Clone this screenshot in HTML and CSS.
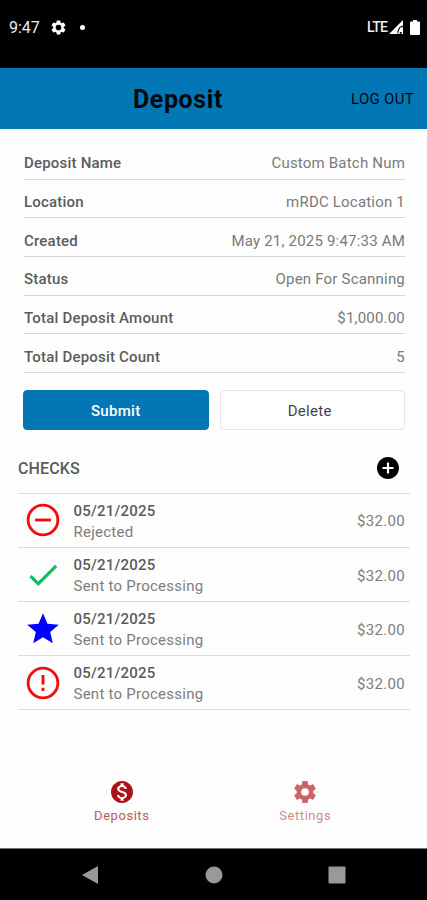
FILE: index.html
```html
<!DOCTYPE html>
<html lang="en">
<head>
  <meta charset="UTF-8" />
  <meta name="viewport" content="width=device-width, initial-scale=1.0"/>
  <title>Deposit</title>
  <link rel="stylesheet" href="styles.css">
</head>
<body>
  <div class="status-bar">
    <span class="clock">9:47</span>
    <svg class="status-gear" viewBox="0 0 24 24"><path d="M19.43 12.98c.04-.32.07-.64.07-.98s-.03-.66-.07-.98l2.11-1.65c.19-.15.24-.42.12-.64l-2-3.46c-.12-.22-.39-.3-.61-.22l-2.49 1c-.52-.4-1.08-.73-1.69-.98l-.38-2.65C14.46 2.18 14.25 2 14 2h-4c-.25 0-.46.18-.49.42l-.38 2.65c-.61.25-1.17.59-1.69.98l-2.49-1c-.23-.09-.49 0-.61.22l-2 3.46c-.13.22-.07.49.12.64l2.11 1.65c-.04.32-.07.65-.07.98s.03.66.07.98l-2.11 1.65c-.19.15-.24.42-.12.64l2 3.46c.12.22.39.3.61.22l2.49-1c.52.4 1.08.73 1.69.98l.38 2.65c.03.24.24.42.49.42h4c.25 0 .46-.18.49-.42l.38-2.65c.61-.25 1.17-.59 1.69-.98l2.49 1c.23.09.49 0 .61-.22l2-3.46c.12-.22.07-.49-.12-.64l-2.11-1.65zM12 16a4 4 0 1 1 0-8 4 4 0 0 1 0 8z"/></svg>
    <span class="dot"></span>
    <span class="lte">LTE</span>
    <svg class="signal" viewBox="0 0 14 14"><path d="M0 14L14 0V5.500L10.500 7 8.500 10.500V14zM10 10l1.500-2.500L14 7v7h-2l1-2h-2l-.5 2H9z"/></svg>
    <svg class="battery" viewBox="0 0 10 15"><path d="M3 0h4v1.500h2a1 1 0 0 1 1 1V14a1 1 0 0 1-1 1H1a1 1 0 0 1-1-1V2.500a1 1 0 0 1 1-1h2z"/></svg>
  </div>

  <header>
    <h1>Deposit</h1>
    <a class="logout">LOG OUT</a>
  </header>

  <main>
    <dl class="details">
      <div class="row"><dt>Deposit Name</dt><dd>Custom Batch Num</dd></div>
      <div class="row"><dt>Location</dt><dd>mRDC Location 1</dd></div>
      <div class="row"><dt>Created</dt><dd>May 21, 2025 9:47:33 AM</dd></div>
      <div class="row"><dt>Status</dt><dd>Open For Scanning</dd></div>
      <div class="row"><dt>Total Deposit Amount</dt><dd>$1,000.00</dd></div>
      <div class="row"><dt>Total Deposit Count</dt><dd>5</dd></div>
    </dl>

    <div class="actions">
      <button class="submit">Submit</button>
      <button class="delete">Delete</button>
    </div>

    <div class="checks-head">
      <h2>CHECKS</h2>
      <svg class="add" viewBox="2 2 20 20"><path d="M12 2C6.480 2 2 6.480 2 12s4.480 10 10 10 10-4.480 10-10S17.520 2 12 2zm5 11h-4v4h-2v-4H7v-2h4V7h2v4h4v2z"/></svg>
    </div>

    <ul class="checks">
      <li>
        <svg class="icon rejected" viewBox="0 0 24 24"><circle cx="12" cy="12" r="9.400"/><path d="M7 12h10"/></svg>
        <div class="info"><b>05/21/2025</b><span>Rejected</span></div>
        <span class="amount">$32.00</span>
      </li>
      <li>
        <svg class="icon done" viewBox="0 0 24 24"><path d="M9 16.170L4.830 12l-1.420 1.410L9 19 21 7l-1.410-1.410z"/></svg>
        <div class="info"><b>05/21/2025</b><span>Sent to Processing</span></div>
        <span class="amount">$32.00</span>
      </li>
      <li>
        <svg class="icon star" viewBox="0 0 24 24"><path d="M12 17.270L18.180 21l-1.640-7.030L22 9.240l-7.190-.61L12 2 9.190 8.630 2 9.240l5.460 4.730L5.820 21z"/></svg>
        <div class="info"><b>05/21/2025</b><span>Sent to Processing</span></div>
        <span class="amount">$32.00</span>
      </li>
      <li>
        <svg class="icon rejected" viewBox="0 0 24 24"><circle cx="12" cy="12" r="9.400"/><path d="M12 7v6M12 15v2"/></svg>
        <div class="info"><b>05/21/2025</b><span>Sent to Processing</span></div>
        <span class="amount">$32.00</span>
      </li>
    </ul>
  </main>

  <nav class="tabs">
    <a class="tab active">
      <svg viewBox="2 2 20 20"><path d="M12 2C6.480 2 2 6.480 2 12s4.480 10 10 10 10-4.480 10-10S17.520 2 12 2zm1.410 16.090V20h-2.670v-1.930c-1.710-.36-3.160-1.460-3.270-3.400h1.960c.1 1.050.82 1.870 2.650 1.870 1.960 0 2.400-.98 2.400-1.590 0-.83-.44-1.610-2.670-2.140-2.480-.6-4.180-1.620-4.180-3.670 0-1.720 1.390-2.840 3.110-3.210V4h2.670v1.950c1.860.45 2.790 1.860 2.850 3.390H14.300c-.05-1.110-.64-1.870-2.220-1.870-1.500 0-2.400.68-2.400 1.640 0 .84.65 1.390 2.670 1.910s4.180 1.390 4.180 3.910c-.01 1.830-1.380 2.830-3.120 3.160z"/></svg>
      Deposits
    </a>
    <a class="tab">
      <svg viewBox="2 2 20 20"><path d="M19.430 12.980c.04-.32.07-.64.07-.98s-.03-.66-.07-.98l2.110-1.650c.19-.15.24-.42.12-.64l-2-3.460c-.12-.22-.39-.3-.61-.22l-2.490 1c-.52-.4-1.080-.73-1.690-.98l-.38-2.650C14.460 2.180 14.250 2 14 2h-4c-.25 0-.46.18-.49.42l-.38 2.650c-.61.25-1.170.59-1.690.98l-2.490-1c-.23-.09-.49 0-.61.22l-2 3.460c-.13.22-.07.49.12.64l2.110 1.650c-.04.32-.07.65-.07.98s.03.66.07.98l-2.110 1.650c-.19.15-.24.42-.12.64l2 3.460c.12.22.39.3.61.22l2.490-1c.52.4 1.080.73 1.690.98l.38 2.650c.03.24.24.42.49.42h4c.25 0 .46-.18.49-.42l.38-2.650c.61-.25 1.170-.59 1.690-.98l2.490 1c.23.09.49 0 .61-.22l2-3.460c.12-.22.07-.49-.12-.64l-2.110-1.650zM12 15.500a3.500 3.500 0 1 1 0-7 3.500 3.500 0 0 1 0 7z"/></svg>
      Settings
    </a>
  </nav>

  <div class="system-nav">
    <svg viewBox="0 0 18 18"><path d="M1 9L17 0v18z"/></svg>
    <svg viewBox="0 0 18 18"><circle cx="9" cy="9" r="8.500"/></svg>
    <svg viewBox="0 0 18 18"><rect x=".5" y=".5" width="17" height="17" rx="1"/></svg>
  </div>
</body>
</html>
```
FILE: styles.css
```css
* {
  box-sizing: border-box;
}
body {
  font-family: Roboto, "Liberation Sans", sans-serif;
  background: #fefefe;
  color: #5c5c5c;
  margin: 0;
  height: 900px;
  display: flex;
  flex-direction: column;
  overflow: hidden;
}
h1, h2, dl, dd, ul {
  margin: 0;
  padding: 0;
}
.status-bar {
  background: #000;
  color: #eee;
  fill: #fff;
  height: 67.5px;
  padding: 0 7px 13px 9px;
  display: flex;
  align-items: center;
  flex-shrink: 0;
}
.clock {
  font-size: 16px;
  width: 41px;
}
.status-gear {
  width: 17px;
  height: 17px;
}
.dot {
  width: 5px;
  height: 5px;
  border-radius: 50%;
  background: #fff;
  margin-left: 13px;
}
.lte {
  font-size: 14px;
  font-weight: 500;
  letter-spacing: -0.8px;
  margin-left: auto;
}
.signal {
  width: 14px;
  height: 14px;
  margin: 0 7px 0 2px;
}
.battery {
  width: 10px;
  height: 15px;
}
header {
  background: #0277b5;
  color: #05080b;
  height: 61px;
  padding: 2px 13px 0 133px;
  display: flex;
  align-items: center;
  justify-content: space-between;
  flex-shrink: 0;
}
h1 {
  font-size: 25px;
  font-weight: 700;
  letter-spacing: 0.6px;
}
.logout {
  font-size: 15px;
  letter-spacing: 0.3px;
}
main {
  padding: 12.5px 17px 0 18px;
  flex: 1;
}
.details {
  padding: 0 5px 0 6px;
}
.row {
  height: 38.65px;
  padding-top: 7px;
  border-bottom: 1px solid #d8d8d8;
  display: flex;
  align-items: center;
  justify-content: space-between;
  font-size: 15px;
  letter-spacing: 0.2px;
}
dt {
  font-weight: 500;
}
dd {
  color: #7a7a7a;
}
.actions {
  display: grid;
  grid-template-columns: 1fr 1fr;
  gap: 11px;
  margin: 17px 5px 0 5px;
}
button {
  height: 40px;
  border: 1px solid #e4e6e6;
  border-radius: 4px;
  background: #fff;
  color: #444;
  font-family: inherit;
  font-size: 15px;
  padding-top: 3px;
  letter-spacing: 0.3px;
}
.delete {
  padding-right: 11px;
}
.submit {
  background: #0277b5;
  border-color: #0277b5;
  color: #fff;
  font-weight: 500;
}
.checks-head {
  height: 63px;
  padding: 13px 11px 0 0;
  display: flex;
  align-items: center;
  justify-content: space-between;
}
h2 {
  font-size: 16px;
  font-weight: 500;
  letter-spacing: 0.1px;
  padding-top: 2px;
}
.add {
  width: 22px;
  height: 22px;
  fill: #000;
}
.checks {
  list-style: none;
  border-top: 1px solid #ddd;
}
.checks li {
  height: 54.15px;
  border-bottom: 1px solid #ddd;
  padding: 0 5px 0 6px;
  display: flex;
  align-items: center;
}
.icon {
  width: 38px;
  height: 38px;
  margin-right: 11.5px;
}
.rejected {
  fill: none;
  stroke: #f20d0d;
  stroke-width: 1.8;
}
.done {
  fill: #12bd5b;
}
.star {
  fill: #00f;
}
.info {
  display: flex;
  flex-direction: column;
  font-size: 15px;
  line-height: 21px;
  letter-spacing: 0.25px;
  padding-top: 3px;
}
.info b {
  font-weight: 500;
  letter-spacing: 0.2px;
}
.info span, .amount {
  color: #7d7d7d;
}
.amount {
  margin-left: auto;
  padding-top: 2px;
  font-size: 15px;
  letter-spacing: 0.3px;
}
.tabs {
  height: 79px;
  margin: 0 30px;
  border-top: 1px solid #f8f8f8;
  padding-top: 11px;
  display: grid;
  grid-template-columns: 1fr 1fr;
}
.tab {
  display: flex;
  flex-direction: column;
  align-items: center;
  gap: 5px;
  font-size: 13px;
  letter-spacing: 0.55px;
  color: #d58a8d;
  fill: #ca6467;
}
.tab svg {
  width: 22px;
  height: 22px;
}
.tab.active {
  color: #b95a5e;
  fill: #ae1118;
}
.system-nav {
  background: #000;
  height: 52px;
  border-top: 1px solid #777;
  padding: 0 81px;
  display: flex;
  align-items: center;
  justify-content: space-between;
  flex-shrink: 0;
}
.system-nav svg {
  width: 18px;
  height: 18px;
  fill: #999;
}
```
